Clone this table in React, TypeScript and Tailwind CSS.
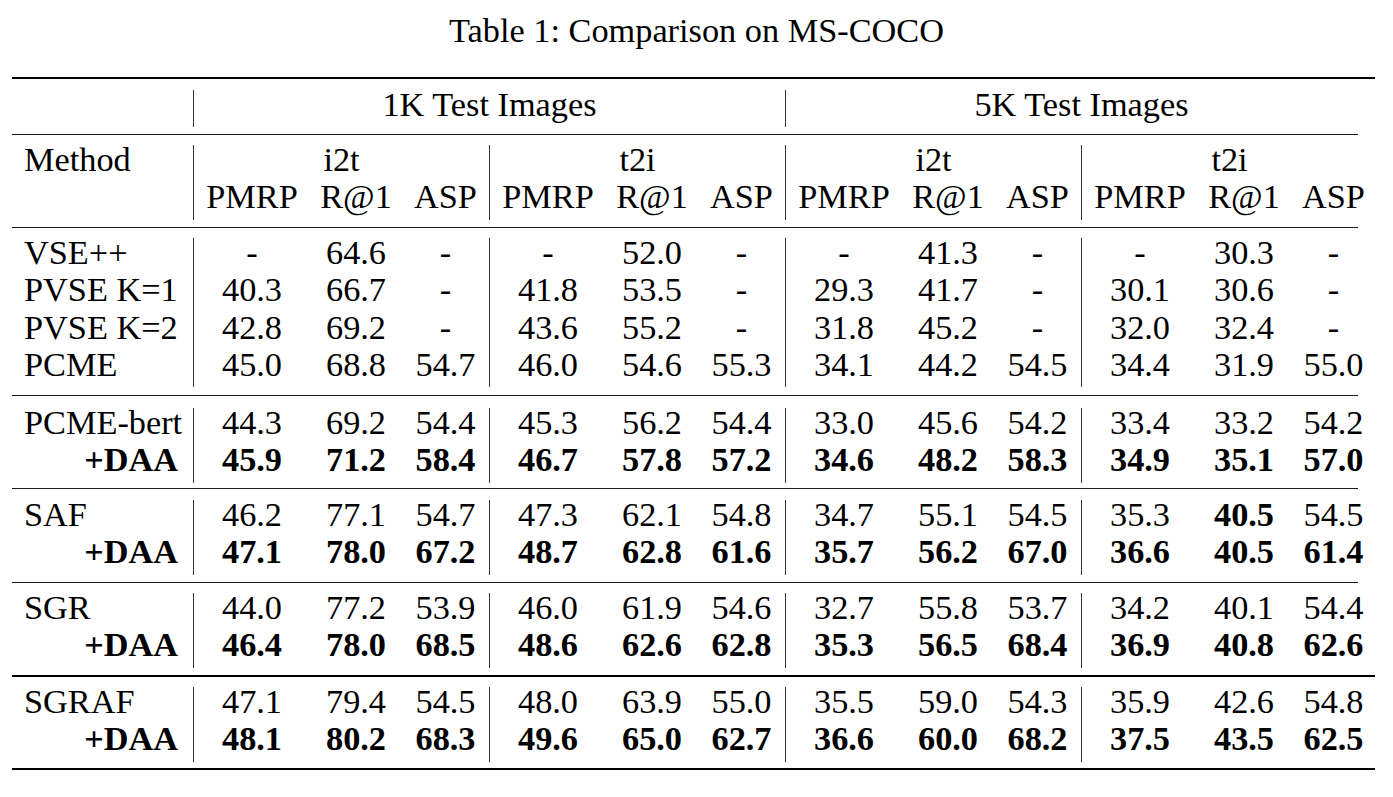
import React from "react";

type Row = { name: string; daa?: boolean; cells: string[] };

const blocks: { pt: string; pb: string; rows: Row[] }[] = [
  {
    pt: "pt-[10px]",
    pb: "pb-[7.67px]",
    rows: [
      { name: "VSE++", cells: ["-", "64.6", "-", "-", "52.0", "-", "-", "41.3", "-", "-", "30.3", "-"] },
      { name: "PVSE K=1", cells: ["40.3", "66.7", "-", "41.8", "53.5", "-", "29.3", "41.7", "-", "30.1", "30.6", "-"] },
      { name: "PVSE K=2", cells: ["42.8", "69.2", "-", "43.6", "55.2", "-", "31.8", "45.2", "-", "32.0", "32.4", "-"] },
      { name: "PCME", cells: ["45.0", "68.8", "54.7", "46.0", "54.6", "55.3", "34.1", "44.2", "54.5", "34.4", "31.9", "55.0"] },
    ],
  },
  {
    pt: "pt-[12px]",
    pb: "pb-[5.33px]",
    rows: [
      { name: "PCME-bert", cells: ["44.3", "69.2", "54.4", "45.3", "56.2", "54.4", "33.0", "45.6", "54.2", "33.4", "33.2", "54.2"] },
      { name: "+DAA", daa: true, cells: ["45.9", "71.2", "58.4", "46.7", "57.8", "57.2", "34.6", "48.2", "58.3", "34.9", "35.1", "57.0"] },
    ],
  },
  {
    pt: "pt-[11px]",
    pb: "pb-[7.33px]",
    rows: [
      { name: "SAF", cells: ["46.2", "77.1", "54.7", "47.3", "62.1", "54.8", "34.7", "55.1", "54.5", "35.3", "*40.5", "54.5"] },
      { name: "+DAA", daa: true, cells: ["47.1", "78.0", "67.2", "48.7", "62.8", "61.6", "35.7", "56.2", "67.0", "36.6", "40.5", "61.4"] },
    ],
  },
  {
    pt: "pt-[10px]",
    pb: "pb-[7.33px]",
    rows: [
      { name: "SGR", cells: ["44.0", "77.2", "53.9", "46.0", "61.9", "54.6", "32.7", "55.8", "53.7", "34.2", "40.1", "54.4"] },
      { name: "+DAA", daa: true, cells: ["46.4", "78.0", "68.5", "48.6", "62.6", "62.8", "35.3", "56.5", "68.4", "36.9", "40.8", "62.6"] },
    ],
  },
  {
    pt: "pt-[10.4px]",
    pb: "pb-[5.9px]",
    rows: [
      { name: "SGRAF", cells: ["47.1", "79.4", "54.5", "48.0", "63.9", "55.0", "35.5", "59.0", "54.3", "35.9", "42.6", "54.8"] },
      { name: "+DAA", daa: true, cells: ["48.1", "80.2", "68.3", "49.6", "65.0", "62.7", "36.6", "60.0", "68.2", "37.5", "43.5", "62.5"] },
    ],
  },
];

const rowCls = "h-[37.33px] leading-[29.33px] whitespace-nowrap";
const groupCls = "w-[296px] border-l border-[#333] flex flex-col";
const gridCls = "grid grid-cols-[116px_92px_87px]";

function ThinRule() {
  return <div className="h-px w-[1346px] bg-[#1a1a1a]" />;
}

function DataBlock({ pt, pb, rows }: { pt: string; pb: string; rows: Row[] }) {
  return (
    <div className={`${pt} ${pb}`}>
      <div className="flex">
        <div className="w-[181px] flex flex-col">
          {rows.map((r, i) => (
            <div
              key={i}
              className={`${rowCls} ${r.daa ? "font-bold text-right pr-[15px]" : "pl-[12px]"}`}
            >
              {r.name}
            </div>
          ))}
        </div>
        {[0, 1, 2, 3].map((g) => (
          <div key={g} className={groupCls}>
            {rows.map((r, i) => (
              <div key={i} className={`${gridCls} ${rowCls}`}>
                {r.cells.slice(g * 3, g * 3 + 3).map((c, j) => {
                  const starred = c.startsWith("*");
                  const txt = starred ? c.slice(1) : c;
                  return (
                    <div
                      key={j}
                      className={`text-center ${r.daa || starred ? "font-bold" : ""}`}
                    >
                      {txt}
                    </div>
                  );
                })}
              </div>
            ))}
          </div>
        ))}
      </div>
    </div>
  );
}

export default function App() {
  return (
    <div className="w-[1393px] h-[797px] bg-white text-black font-['Liberation_Serif','Times_New_Roman',serif] text-[34.3px] overflow-hidden">
      <div className="h-[76.5px] pt-[11.4px] text-center leading-[38px]">
        Table 1: Comparison on MS-COCO
      </div>
      <div className="pl-[12px]">
        <div className="h-[2.6px] w-[1363px] bg-black" />
        {/* Block A */}
        <div className="pt-[11px] pb-[6.67px]">
          <div className="flex">
            <div className="w-[181px]" />
            <div className={`w-[592px] border-l border-[#333] text-center ${rowCls}`}>
              1K Test Images
            </div>
            <div className={`w-[592px] border-l border-[#333] text-center ${rowCls}`}>
              5K Test Images
            </div>
          </div>
        </div>
        <ThinRule />
        {/* Block B */}
        <div className="pt-[10px] pb-[7.33px]">
          <div className="flex">
            <div className="w-[181px] flex flex-col">
              <div className={`${rowCls} pl-[12px]`}>Method</div>
              <div className={rowCls} />
            </div>
            {["i2t", "t2i", "i2t", "t2i"].map((h, g) => (
              <div key={g} className={groupCls}>
                <div className={`${rowCls} text-center`}>{h}</div>
                <div className={`${gridCls} ${rowCls}`}>
                  <div className="text-center">PMRP</div>
                  <div className="text-center">R@1</div>
                  <div className="text-center">ASP</div>
                </div>
              </div>
            ))}
          </div>
        </div>
        <ThinRule />
        <DataBlock {...blocks[0]} />
        <ThinRule />
        <DataBlock {...blocks[1]} />
        <ThinRule />
        <DataBlock {...blocks[2]} />
        <ThinRule />
        <DataBlock {...blocks[3]} />
        <div className="h-[1.6px] w-[1363px] bg-black" />
        <DataBlock {...blocks[4]} />
        <div className="h-[2.6px] w-[1363px] bg-black" />
      </div>
    </div>
  );
}
